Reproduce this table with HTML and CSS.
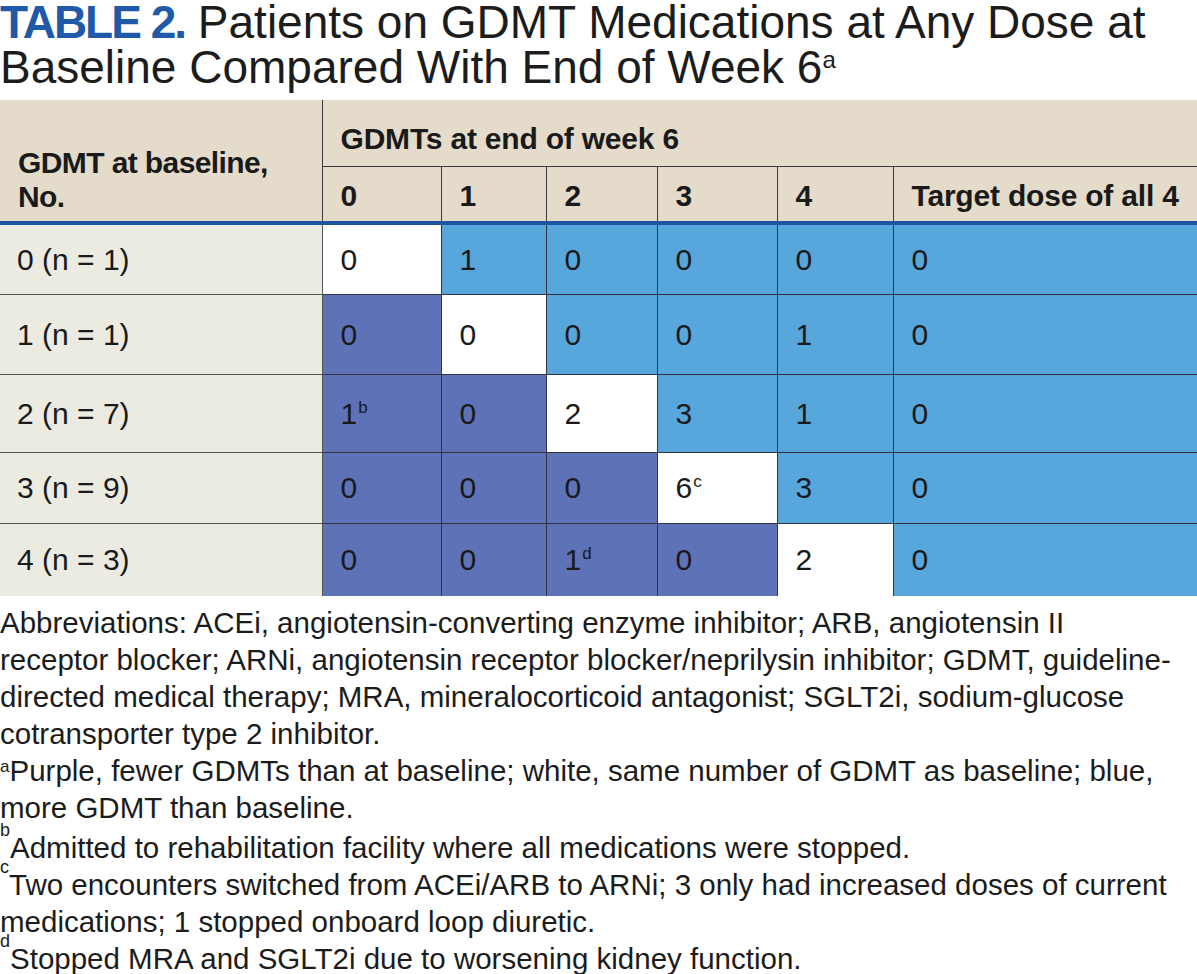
FILE: index.html
```html
<!DOCTYPE html>
<html lang="en">
<head>
<meta charset="utf-8">
<title>Table 2</title>
<link rel="stylesheet" href="styles.css">
</head>
<body>
<h1 class="title"><span class="label">TABLE 2.</span> Patients on GDMT Medications at Any Dose at<br>Baseline Compared With End of Week 6<sup class="title-sup">a</sup></h1>
<table class="grid">
  <colgroup>
    <col class="c-base"><col class="c1"><col class="c2"><col class="c3"><col class="c4"><col class="c5"><col class="c6">
  </colgroup>
  <thead>
    <tr class="h1row">
      <th class="base-head" rowspan="2">GDMT at baseline,<br>No.</th>
      <th class="span-head" colspan="6">GDMTs at end of week 6</th>
    </tr>
    <tr class="h2row">
      <th>0</th><th>1</th><th>2</th><th>3</th><th>4</th><th>Target dose of all 4</th>
    </tr>
  </thead>
  <tbody>
    <tr class="r1">
      <td class="base">0 (n = 1)</td>
      <td class="same">0</td><td class="more">1</td><td class="more">0</td><td class="more">0</td><td class="more">0</td><td class="more">0</td>
    </tr>
    <tr class="r2">
      <td class="base">1 (n = 1)</td>
      <td class="fewer">0</td><td class="same">0</td><td class="more">0</td><td class="more">0</td><td class="more">1</td><td class="more">0</td>
    </tr>
    <tr class="r3">
      <td class="base">2 (n = 7)</td>
      <td class="fewer">1<sup class="cell-sup">b</sup></td><td class="fewer">0</td><td class="same">2</td><td class="more">3</td><td class="more">1</td><td class="more">0</td>
    </tr>
    <tr class="r4">
      <td class="base">3 (n = 9)</td>
      <td class="fewer">0</td><td class="fewer">0</td><td class="fewer">0</td><td class="same">6<sup class="cell-sup">c</sup></td><td class="more">3</td><td class="more">0</td>
    </tr>
    <tr class="r5">
      <td class="base">4 (n = 3)</td>
      <td class="fewer">0</td><td class="fewer">0</td><td class="fewer">1<sup class="cell-sup">d</sup></td><td class="fewer">0</td><td class="same">2</td><td class="more">0</td>
    </tr>
  </tbody>
</table>
<div class="notes">
  <p>Abbreviations: ACEi, angiotensin-converting enzyme inhibitor; ARB, angiotensin II<br>receptor blocker; ARNi, angiotensin receptor blocker/neprilysin inhibitor; GDMT, guideline-<br>directed medical therapy; MRA, mineralocorticoid antagonist; SGLT2i, sodium-glucose<br>cotransporter type 2 inhibitor.</p>
  <p><sup class="note-a">a</sup>Purple, fewer GDMTs than at baseline; white, same number of GDMT as baseline; blue,<br>more GDMT than baseline.</p>
  <p class="note-b"><sup class="note-sup">b</sup>Admitted to rehabilitation facility where all medications were stopped.</p>
  <p><sup class="note-sup">c</sup>Two encounters switched from ACEi/ARB to ARNi; 3 only had increased doses of current<br>medications; 1 stopped onboard loop diuretic.</p>
  <p><sup class="note-sup">d</sup>Stopped MRA and SGLT2i due to worsening kidney function.</p>
</div>
</body>
</html>
```
FILE: styles.css
```css
html, body {
  margin: 0;
  padding: 0;
  background: #ffffff;
}
body {
  width: 1197px;
  font-family: "Liberation Sans", Arial, Helvetica, sans-serif;
  color: #1c1c1c;
}
.title {
  margin: 0;
  font-size: 46px;
  font-weight: normal;
  line-height: 45px;
  color: #1c1c1c;
  white-space: nowrap;
}
.title .label {
  font-weight: bold;
  color: #1f59a7;
  letter-spacing: -2px;
}
.title-sup {
  font-size: 24px;
  line-height: 0;
  vertical-align: 15px;
}
.grid {
  margin-top: 10px;
  width: 1197px;
  table-layout: fixed;
  border-collapse: collapse;
  font-size: 30px;
}
.c-base { width: 322px; }
.c1 { width: 119px; }
.c2 { width: 105px; }
.c3 { width: 111px; }
.c4 { width: 120px; }
.c5 { width: 116px; }
.c6 { width: 304px; }
.grid th {
  background: #e4dbca;
  font-weight: bold;
  font-size: 30px;
  text-align: left;
  padding: 0 0 0 18px;
  color: #1a1a1a;
  letter-spacing: -0.2px;
}
.h1row th { height: 54px; }
.span-head {
  border-left: 1px solid #3a3a3a;
  border-bottom: 1px solid #3a3a3a;
  padding-top: 12px !important;
  vertical-align: middle;
}
.base-head {
  vertical-align: bottom;
  line-height: 34px;
  padding-bottom: 7px !important;
  border-bottom: 4px solid #1d55a1;
  letter-spacing: -0.6px !important;
}
.h2row th {
  height: 50px;
  border-left: 1px solid #3a3a3a;
  border-bottom: 4px solid #1d55a1;
  padding-top: 4px;
}
.grid td {
  padding: 0 0 0 18px;
  border: 1px solid #2f3340;
  vertical-align: middle;
  color: #1a1a1a;
  white-space: nowrap;
}
.grid td.base {
  background: #ecebe2;
  border-left: none;
  padding-left: 17px;
  border-color: #555;
}
.grid td:last-child { border-right: none; }
.grid tbody tr:last-child td { border-bottom: none; }
.grid tbody tr:first-child td { border-top: 4px solid #1d55a1; }
.r1 td { height: 69px; }
.r2 td { height: 79px; }
.r3 td { height: 77px; }
.r4 td { height: 70px; }
.r5 td { height: 72px; }
.same { background: #ffffff; }
.more { background: #57a6dc; }
.fewer { background: #5e72b7; }
.cell-sup {
  font-size: 17px;
  line-height: 0;
  vertical-align: 11px;
  margin-left: 1px;
}
.notes {
  margin-top: 8px;
  font-size: 29.5px;
  line-height: 37px;
  color: #1c1c1c;
  white-space: nowrap;
}
.notes p { margin: 0; }
.note-a {
  font-size: 17px;
  line-height: 0;
  vertical-align: 9px;
}
.note-b { margin-top: 3px !important; }
.note-sup {
  font-size: 18px;
  line-height: 0;
  vertical-align: 22px;
}
```
